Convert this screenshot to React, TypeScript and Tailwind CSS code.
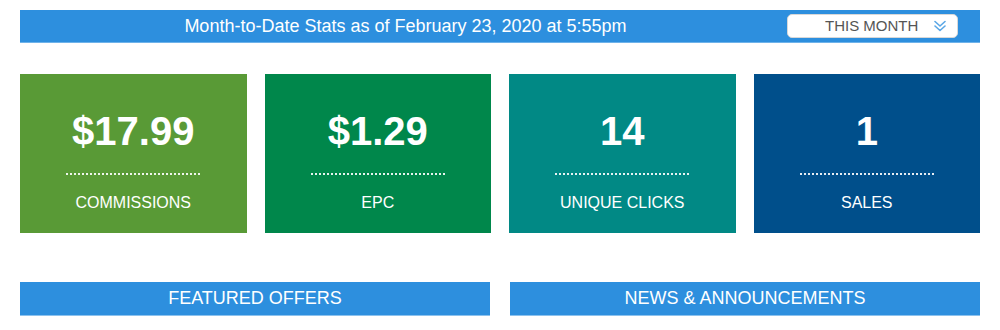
const stats = [
  { value: '$17.99', label: 'COMMISSIONS', bg: 'bg-[#599a36]' },
  { value: '$1.29', label: 'EPC', bg: 'bg-[#00874b]' },
  { value: '14', label: 'UNIQUE CLICKS', bg: 'bg-[#018985]' },
  { value: '1', label: 'SALES', bg: 'bg-[#004f8b]' },
];

function DoubleChevron() {
  return (
    <svg width="12" height="12" viewBox="0 0 12 12" fill="none" stroke="#5aa7e6" strokeWidth="1.6" strokeLinecap="round" strokeLinejoin="round">
      <path d="M1 1.5 6 6 11 1.5" />
      <path d="M1 6 6 10.5 11 6" />
    </svg>
  );
}

export default function App() {
  return (
    <main className="w-[1000px] h-[330px] bg-white px-5 pt-[10px] font-['Liberation_Sans',Arial,sans-serif]">
      {/* header bar */}
      <div className="flex items-center h-[33px] bg-[#2d8fde] border-b border-[#6fb3ea]">
        <div className="flex-1 text-center text-white text-[18px] pl-[4px]">
          Month-to-Date Stats as of February 23, 2020 at 5:55pm
        </div>
        <button className="mr-[22px] flex items-center justify-between w-[171px] h-[24px] bg-white rounded-[5px] border border-[#d8d8d8] pl-[37px] pr-[11px] text-[15px] text-[#555]">
          <span>THIS MONTH</span>
          <DoubleChevron />
        </button>
      </div>

      {/* stat cards */}
      <div className="grid grid-cols-4 gap-[18px] mt-[31px]">
        {stats.map((s) => (
          <div key={s.label} className={`${s.bg} h-[159px] flex flex-col items-center text-white`}>
            <div className="mt-[34px] text-[40px] font-bold leading-[46px]">{s.value}</div>
            <div className="mt-[19px] w-[134px] border-t-2 border-dotted border-white/90" />
            <div className="mt-[18px] text-[16px] leading-[20px]">{s.label}</div>
          </div>
        ))}
      </div>

      {/* section headers */}
      <div className="grid grid-cols-2 gap-[20px] mt-[49px]">
        <div className="h-[34px] bg-[#2d8fde] border-b border-[#8cc2ee] flex items-center justify-center text-white text-[18px]">
          FEATURED OFFERS
        </div>
        <div className="h-[34px] bg-[#2d8fde] border-b border-[#8cc2ee] flex items-center justify-center text-white text-[18px]">
          NEWS &amp; ANNOUNCEMENTS
        </div>
      </div>
    </main>
  );
}
